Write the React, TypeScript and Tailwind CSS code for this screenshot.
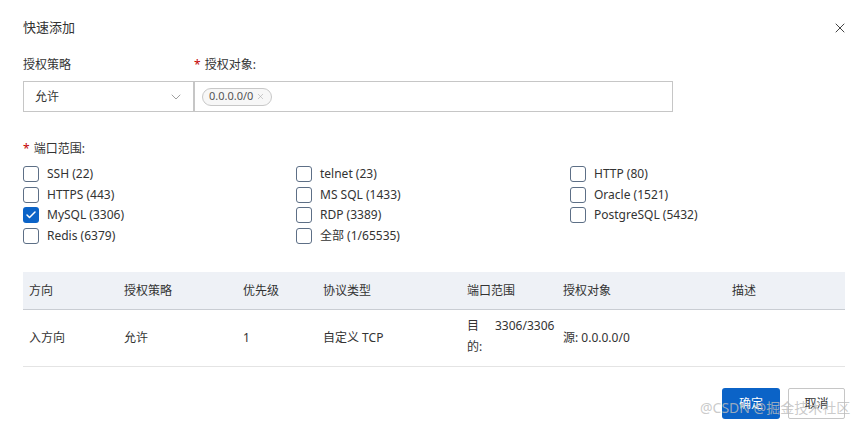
import { Check, ChevronDown, X } from 'lucide-react';

const ports = [
  [
    { label: 'SSH (22)', checked: false },
    { label: 'HTTPS (443)', checked: false },
    { label: 'MySQL (3306)', checked: true },
    { label: 'Redis (6379)', checked: false },
  ],
  [
    { label: 'telnet (23)', checked: false },
    { label: 'MS SQL (1433)', checked: false },
    { label: 'RDP (3389)', checked: false },
    { label: '全部 (1/65535)', checked: false },
  ],
  [
    { label: 'HTTP (80)', checked: false },
    { label: 'Oracle (1521)', checked: false },
    { label: 'PostgreSQL (5432)', checked: false },
  ],
];

const columns = [
  { title: '方向', w: 'w-[95px]' },
  { title: '授权策略', w: 'w-[119px]' },
  { title: '优先级', w: 'w-[80px]' },
  { title: '协议类型', w: 'w-[144px]' },
  { title: '端口范围', w: 'w-[96px]' },
  { title: '授权对象', w: 'w-[169px]' },
  { title: '描述', w: 'flex-1' },
];

const CheckItem = ({ label, checked }: { label: string; checked: boolean }) => (
  <label className="flex items-center h-[20.5px] gap-2">
    {checked ? (
      <span className="w-4 h-4 rounded-[3px] bg-[#0b63c7] flex items-center justify-center">
        <Check className="w-3 h-3 text-white" strokeWidth={3} />
      </span>
    ) : (
      <span className="w-4 h-4 rounded-[3px] border border-[#5d6f86] bg-white" />
    )}
    <span className="text-[12px] text-[#333]">{label}</span>
  </label>
);

const App = () => {
  return (
    <div
      className="relative w-[867px] h-[425px] bg-white text-[#333] overflow-hidden"
      style={{ fontFamily: '"Noto Sans", "Noto Sans CJK SC", sans-serif' }}
    >
      {/* Header */}
      <div className="flex items-center justify-between pl-[23px] pr-[19px] pt-[17px] h-[38px]">
        <span className="text-[13px]">快速添加</span>
        <X className="w-[16px] h-[16px] text-[#444]" strokeWidth={1.5} />
      </div>

      {/* Policy + target */}
      <div className="flex pl-[23px] mt-[17px]">
        <div className="w-[171px] flex flex-col">
          <span className="text-[12px] h-[20px] leading-[20px]">授权策略</span>
          <div className="mt-[6px] h-[31px] border border-[#c6c6c6] flex items-center justify-between pl-[11px] pr-[9px]">
            <span className="text-[12px]">允许</span>
            <ChevronDown className="w-[16px] h-[16px] text-[#888]" strokeWidth={1.2} />
          </div>
        </div>
        <div className="w-[479px] flex flex-col">
          <span className="text-[12px] h-[20px] leading-[20px]">
            <span className="text-[#c40000] mr-[4px]">*</span>授权对象:
          </span>
          <div className="mt-[6px] h-[31px] border border-[#c6c6c6] flex items-center pl-[7px]">
            <span className="flex items-center gap-[3px] h-[18px] px-[6px] rounded-full border border-[#c8c8c8] bg-[#f7f7f7] text-[11px] text-[#555]">
              0.0.0.0/0
              <X className="w-[9px] h-[9px] text-[#aaa]" strokeWidth={1.5} />
            </span>
          </div>
        </div>
      </div>

      {/* Ports */}
      <div className="pl-[23px] mt-[27px]">
        <span className="text-[12px] h-[20px] leading-[20px] block">
          <span className="text-[#c40000] mr-[4px]">*</span>端口范围:
        </span>
        <div className="grid grid-cols-[273px_274px_1fr] mt-[5px]">
          {ports.map((col, i) => (
            <div key={i} className="flex flex-col">
              {col.map((p) => (
                <CheckItem key={p.label} label={p.label} checked={p.checked} />
              ))}
            </div>
          ))}
        </div>
      </div>

      {/* Table */}
      <div className="mx-[23px] mt-[26px] w-[822px]">
        <div className="flex h-[38px] items-center bg-[#eef1f6] border-b border-[#c9cdd3]">
          {columns.map((c) => (
            <div key={c.title} className={`${c.w} pl-[6px] text-[12px]`}>
              {c.title}
            </div>
          ))}
        </div>
        <div className="flex h-[57px] items-center border-b border-[#e4e4e4] text-[12px]">
          <div className="w-[95px] pl-[6px]">入方向</div>
          <div className="w-[119px] pl-[6px]">允许</div>
          <div className="w-[80px] pl-[6px]">1</div>
          <div className="w-[144px] pl-[6px]">自定义 TCP</div>
          <div className="w-[96px] pl-[6px] flex items-start gap-[14px] -mt-[4px]">
            <span className="w-[14px] leading-[21px]">目的:</span>
            <span className="leading-[21px]">3306/3306</span>
          </div>
          <div className="w-[169px] pl-[6px]">源: 0.0.0.0/0</div>
          <div className="flex-1 pl-[6px]" />
        </div>
      </div>

      {/* Footer */}
      <div className="flex justify-end gap-[8px] pr-[22px] mt-[21px]">
        <button className="w-[58px] h-[31px] rounded-[3px] bg-[#0b63c7] text-white text-[12px]">确定</button>
        <button className="w-[57px] h-[31px] rounded-[2px] border border-[#c6c6c6] bg-white text-[12px] text-[#333]">
          取消
        </button>
      </div>

      {/* Watermark */}
      <span className="absolute left-[700px] top-[400px] text-[14px] leading-[16px] text-[#bdbdbd]/80 whitespace-nowrap pointer-events-none">
        @CSDN @掘金技术社区
      </span>
    </div>
  );
};

export default App;
